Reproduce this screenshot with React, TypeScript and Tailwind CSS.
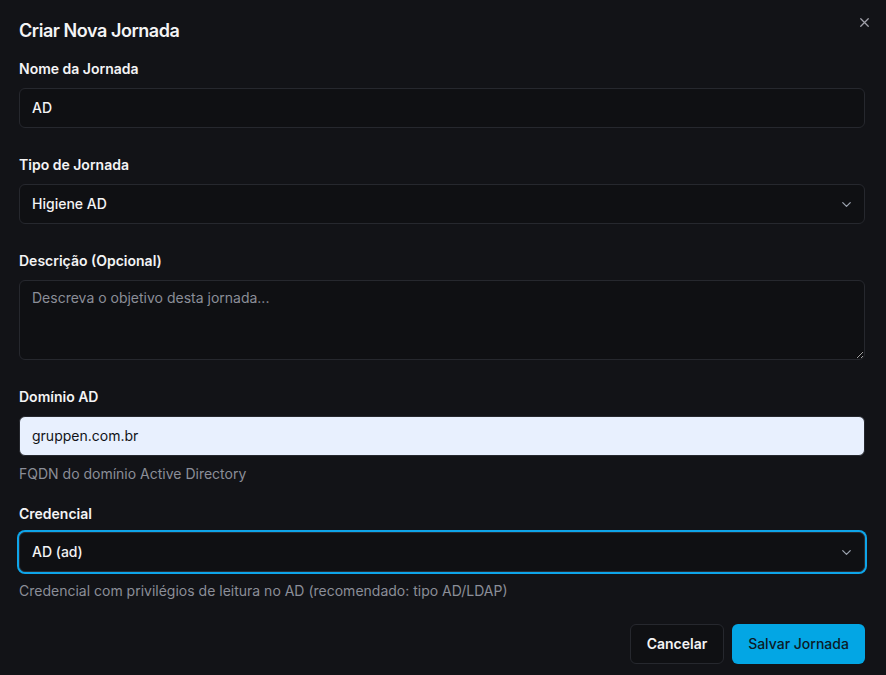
import React from "react";

const font = { fontFamily: "Inter, 'Liberation Sans', sans-serif" };

function Chevron() {
  return (
    <svg width="15" height="15" viewBox="0 0 24 24" fill="none" stroke="#9ca3af" strokeWidth="2" strokeLinecap="round" strokeLinejoin="round">
      <path d="m6 9 6 6 6-6" />
    </svg>
  );
}

export default function App() {
  return (
    <div className="w-full h-[675px] bg-[#121317] text-[#f4f4f5] pl-[19px] pr-[21px] relative overflow-hidden" style={font}>
      <button className="absolute right-[14px] top-[15px] text-[#a1a1aa]">
        <svg width="15" height="15" viewBox="0 0 24 24" fill="none" stroke="currentColor" strokeWidth="2" strokeLinecap="round">
          <path d="M18 6 6 18M6 6l12 12" />
        </svg>
      </button>
      <h2 className="pt-[17px] text-[18px] leading-[28px] font-semibold tracking-[-0.45px]">Criar Nova Jornada</h2>

      <div className="mt-[14px]">
        <label className="block text-sm leading-5 font-semibold">Nome da Jornada</label>
        <div className="mt-[9px] h-10 rounded-md border border-[#26282e] bg-[#0f1013] flex items-center px-3 text-sm font-medium">AD</div>
      </div>

      <div className="mt-[27px]">
        <label className="block text-sm leading-5 font-semibold">Tipo de Jornada</label>
        <div className="mt-[9px] h-10 rounded-md border border-[#26282e] bg-[#0f1013] flex items-center justify-between pl-3 pr-[10px] text-sm font-medium">
          <span>Higiene AD</span>
          <Chevron />
        </div>
      </div>

      <div className="mt-[27px]">
        <label className="block text-sm leading-5 font-semibold">Descrição (Opcional)</label>
        <textarea
          className="mt-[9px] block w-full h-20 rounded-md border border-[#26282e] bg-[#0f1013] px-3 py-[7px] text-sm leading-5 text-[#f4f4f5] placeholder:text-[#8b8e98] outline-none"
          placeholder="Descreva o objetivo desta jornada..."
          style={font}
        />
      </div>

      <div className="mt-[27px]">
        <label className="block text-sm leading-5 font-semibold">Domínio AD</label>
        <div className="mt-[9px] h-10 rounded-md border border-[#26282e] bg-[#e8f0fe] flex items-center px-3 text-sm text-[#111318]">gruppen.com.br</div>
        <p className="mt-[8px] text-sm leading-5 text-[#8b8e98]">FQDN do domínio Active Directory</p>
      </div>

      <div className="mt-[20px]">
        <label className="block text-sm leading-5 font-semibold">Credencial</label>
        <div className="mt-[8px] h-10 rounded-md border border-[#2a2c33] bg-[#0f1013] ring-2 ring-[#0ea5e9] flex items-center justify-between pl-3 pr-[10px] text-sm font-medium">
          <span>AD (ad)</span>
          <Chevron />
        </div>
        <p className="mt-[9px] text-sm leading-5 text-[#8b8e98]">Credencial com privilégios de leitura no AD (recomendado: tipo AD/LDAP)</p>
      </div>

      <div className="mt-[23px] flex justify-end gap-2">
        <button className="h-10 w-[94px] rounded-md border border-[#26282e] bg-[#0f1013] text-sm font-semibold text-[#f4f4f5]">Cancelar</button>
        <button className="h-10 w-[133px] rounded-md bg-[#03a6e4] text-sm font-medium text-[#0c1a26]">Salvar Jornada</button>
      </div>
    </div>
  );
}
